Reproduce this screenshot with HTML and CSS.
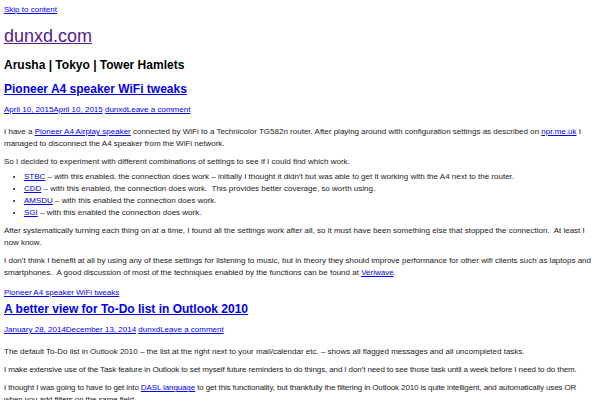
FILE: index.html
```html
<!DOCTYPE html>
<html lang="en">
<head>
<meta charset="utf-8">
<title>dunxd.com</title>
<link rel="stylesheet" href="styles.css">
</head>
<body>
<a class="skip" href="#content">Skip to content</a>
<header class="site-header">
  <h1 class="site-title"><a class="visited" href="#">dunxd.com</a></h1>
  <h2 class="site-desc">Arusha | Tokyo | Tower Hamlets</h2>
</header>
<main id="content">
  <article class="post">
    <h1 class="entry-title"><a href="#">Pioneer A4 speaker WiFi tweaks</a></h1>
    <div class="entry-meta"><a href="#">April 10, 2015April 10, 2015</a> <a href="#">dunxd</a><a href="#">Leave a comment</a></div>
    <p>I have a <a href="#">Pioneer A4 Airplay speaker</a> connected by WiFi to a Technicolor TG582n router. After playing around with configuration settings as described on <a href="#">npr.me.uk</a> I managed to disconnect the A4 speaker from the WiFi network.</p>
    <p>So I decided to experiment with different combinations of settings to see if I could find which work.</p>
    <ul>
      <li><a href="#">STBC</a> – with this enabled, the connection does work – initially I thought it didn’t but was able to get it working with the A4 next to the router.</li>
      <li><a href="#">CDD</a> – with this enabled, the connection does work.&nbsp; This provides better coverage, so worth using.</li>
      <li><a href="#">AMSDU</a> – with this enabled the connection does work.</li>
      <li><a href="#">SGI</a> – with this enabled the connection does work.</li>
    </ul>
    <p>After systematically turning each thing on at a time, I found all the settings work after all, so it must have been something else that stopped the connection.&nbsp; At least I now know.</p>
    <p>I don’t think I benefit at all by using any of these settings for listening to music, but in theory they should improve performance for other wifi clients such as laptops and smartphones.&nbsp; A good discussion of most of the techniques enabled by the functions can be found at <a href="#">Veriwave</a>.</p>
    <div class="entry-footer"><a href="#">Pioneer A4 speaker WiFi tweaks</a></div>
  </article>
  <article class="post">
    <h1 class="entry-title"><a href="#">A better view for To-Do list in Outlook 2010</a></h1>
    <div class="entry-meta"><a href="#">January 28, 2014December 13, 2014</a> <a href="#">dunxd</a><a href="#">Leave a comment</a></div>
    <p>The default To-Do list in Outlook 2010 – the list at the right next to your mail/calendar etc. – shows all flagged messages and all uncompleted tasks.</p>
    <p class="tight">I make extensive use of the Task feature in Outlook to set myself future reminders to do things, and I don’t need to see those task until a week before I need to do them.</p>
    <p class="tight">I thought I was going to have to get into <a href="#">DASL language</a> to get this functionality, but thankfully the filtering in Outlook 2010 is quite intelligent, and automatically uses OR when you add filters on the same field.</p>
  </article>
</main>
</body>
</html>
```

FILE: styles.css
```css
html, body {
  margin: 0;
  padding: 0;
  background: #fff;
}
body {
  padding: 4px;
  font-family: "Liberation Sans", Arial, sans-serif;
  font-size: 8px;
  line-height: 12px;
  color: #222;
}
a {
  color: #0000ee;
}
a.visited {
  color: #551a8b;
}
.skip {
  display: block;
}
.site-title {
  font-size: 18px;
  line-height: 22px;
  font-weight: normal;
  margin: 9px 0 10px;
}
.site-desc {
  font-size: 12px;
  line-height: 16px;
  font-weight: bold;
  color: #000;
  margin: 0 0 8px;
}
.entry-title {
  font-size: 12px;
  line-height: 16px;
  font-weight: bold;
  margin: 2px 0 7px;
}
.entry-meta {
  margin: 0 0 10px;
}
p {
  margin: 6px 0 0;
}
p.tight {
  letter-spacing: -0.12px;
}
ul {
  margin: 3px 0 0;
  padding-left: 20px;
}
.entry-footer {
  margin: 8px 0 0;
}
```
